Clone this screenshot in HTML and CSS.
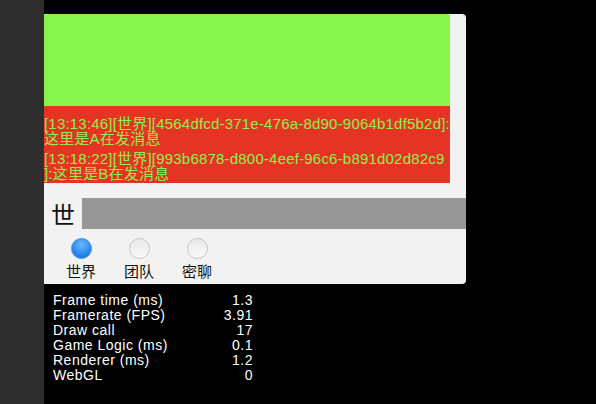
FILE: index.html
```html
<!DOCTYPE html>
<html lang="zh">
<head>
  <meta charset="UTF-8">
  <title>Chat</title>
  <link rel="stylesheet" href="styles.css">
</head>
<body>
  <div class="side"></div>
  <div class="stage">
    <div class="chat">
      <div class="banner"></div>
      <div class="log">
        <div class="msg">[13:13:46][世界][4564dfcd-371e-476a-8d90-9064b1df5b2d]:<br>这里是A在发消息</div>
        <div class="msg">[13:18:22][世界][993b6878-d800-4eef-96c6-b891d02d82c9<br>]:这里是B在发消息</div>
      </div>
      <div class="input-row">
        <span class="channel">世</span>
        <div class="input"></div>
      </div>
      <div class="radios">
        <div class="radio checked"><span class="dot"></span><span class="label">世界</span></div>
        <div class="radio"><span class="dot"></span><span class="label">团队</span></div>
        <div class="radio"><span class="dot"></span><span class="label">密聊</span></div>
      </div>
    </div>
    <div class="stats">
      <span>Frame time (ms)</span><span class="val">1.3</span>
      <span>Framerate (FPS)</span><span class="val">3.91</span>
      <span>Draw call</span><span class="val">17</span>
      <span>Game Logic (ms)</span><span class="val">0.1</span>
      <span>Renderer (ms)</span><span class="val">1.2</span>
      <span>WebGL</span><span class="val">0</span>
    </div>
  </div>
</body>
</html>
```

FILE: styles.css
```css
html, body {
  margin: 0;
  height: 100%;
}
body {
  display: flex;
  background: #000;
  font-family: "Liberation Sans", "Noto Sans CJK SC", sans-serif;
  overflow: hidden;
}
.side {
  width: 44px;
  background: #2e2e2e;
  flex-shrink: 0;
}
.stage {
  padding-top: 14px;
}
.chat {
  width: 422px;
  background: #f2f2f2;
  border-radius: 0 4px 4px 0;
  padding-bottom: 3px;
}
.banner {
  width: 406px;
  height: 92px;
  background: #88f54f;
}
.log {
  width: 406px;
  height: 77px;
  box-sizing: border-box;
  padding-top: 10px;
  background: #e53424;
  color: #8ef04a;
  font-size: 15px;
  letter-spacing: 0.2px;
  line-height: 15px;
  overflow: hidden;
}
.msg {
  white-space: nowrap;
  margin-bottom: 5px;
}
.input-row {
  display: flex;
  align-items: center;
  margin-top: 15px;
  height: 31px;
}
.channel {
  width: 38px;
  box-sizing: border-box;
  padding-left: 7px;
  font-size: 24px;
  color: #111;
}
.input {
  flex: 1;
  height: 31px;
  background: #979797;
}
.radios {
  display: flex;
  padding: 9px 0 0 8px;
}
.radio {
  width: 58px;
  display: flex;
  flex-direction: column;
  align-items: center;
}
.dot {
  width: 19px;
  height: 19px;
  border-radius: 50%;
  border: 1px solid #c4c4c4;
  background: linear-gradient(#e8e8e8, #fafafa);
}
.radio.checked .dot {
  border-color: #3d8ee8;
  background: radial-gradient(circle at 50% 30%, #6cb8ff, #1f7fe8 70%, #1a6fd6);
}
.label {
  margin-top: 4px;
  font-size: 15px;
  line-height: 18px;
  color: #111;
}
.stats {
  display: grid;
  grid-template-columns: 150px 50px;
  margin: 9px 0 0 9px;
  color: #fff;
  font-size: 14px;
  letter-spacing: 0.5px;
  line-height: 15px;
}
.val {
  text-align: right;
}
```
